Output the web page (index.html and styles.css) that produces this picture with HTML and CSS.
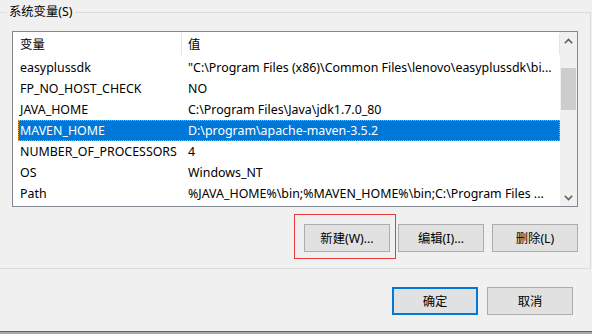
FILE: index.html
```html
<!DOCTYPE html>
<html lang="zh-CN">
<head>
<meta charset="utf-8">
<title>系统变量</title>
<link rel="stylesheet" href="styles.css">
</head>
<body>
<div class="dialog">
  <div class="group">
    <span class="legend">系统变量(S)</span>
    <div class="list">
      <div class="table">
        <div class="hdr"><span class="c1">变量</span><span class="c2">值</span></div>
        <div class="row"><span class="c1">easyplussdk</span><span class="c2">"C:\Program Files (x86)\Common Files\lenovo\easyplussdk\bi...</span></div>
        <div class="row"><span class="c1">FP_NO_HOST_CHECK</span><span class="c2">NO</span></div>
        <div class="row"><span class="c1">JAVA_HOME</span><span class="c2">C:\Program Files\Java\jdk1.7.0_80</span></div>
        <div class="row sel"><span class="c1">MAVEN_HOME</span><span class="c2">D:\program\apache-maven-3.5.2</span></div>
        <div class="row"><span class="c1">NUMBER_OF_PROCESSORS</span><span class="c2">4</span></div>
        <div class="row"><span class="c1">OS</span><span class="c2">Windows_NT</span></div>
        <div class="row"><span class="c1">Path</span><span class="c2">%JAVA_HOME%\bin;%MAVEN_HOME%\bin;C:\Program Files ...</span></div>
      </div>
      <div class="scrollbar">
        <div class="arrow">
          <svg width="9" height="6" viewBox="0 0 9 6"><path d="M0.8 5.2 L4.5 1.5 L8.2 5.2" fill="none" stroke="#606060" stroke-width="1.6"/></svg>
        </div>
        <div class="track"><div class="thumb"></div></div>
        <div class="arrow">
          <svg width="9" height="6" viewBox="0 0 9 6"><path d="M0.8 0.8 L4.5 4.5 L8.2 0.8" fill="none" stroke="#606060" stroke-width="1.6"/></svg>
        </div>
      </div>
    </div>
    <div class="btns">
      <div class="mark-wrap">
        <button class="btn">新建(W)...</button>
        <span class="mark"></span>
      </div>
      <button class="btn">编辑(I)...</button>
      <button class="btn">删除(L)</button>
    </div>
  </div>
  <div class="footer">
    <button class="btn default">确定</button>
    <button class="btn">取消</button>
  </div>
  <div class="edge"></div>
</div>
</body>
</html>
```
FILE: styles.css
```css
html, body {
  margin: 0;
  padding: 0;
  background: #f0f0f0;
}
*, *::before, *::after {
  box-sizing: border-box;
}
body {
  width: 592px;
  height: 334px;
  overflow: hidden;
  font-family: "Noto Sans", "Noto Sans CJK SC", sans-serif;
  font-size: 12px;
  color: #000;
}
.dialog {
  display: flex;
  flex-direction: column;
  height: 334px;
}
.group {
  position: relative;
  margin: 12px 1px 0 -2px;
  border: 1px solid #dcdcdc;
  height: 257px;
  padding: 18px 12px 0 13px;
  display: flex;
  flex-direction: column;
}
.legend {
  position: absolute;
  left: 8px;
  top: -10px;
  padding: 0 3px 0 2px;
  background: #f0f0f0;
  line-height: 18px;
  font-size: 12.3px;
  color: #000;
}
.list {
  border: 1px solid #828790;
  background: #fff;
  height: 176px;
  display: flex;
}
.table {
  flex: 1;
  display: flex;
  flex-direction: column;
  font-size: 12.4px;
}
.hdr {
  display: flex;
  height: 25px;
  align-items: stretch;
}
.hdr .c1 {
  width: 169px;
  padding-left: 7px;
  border-right: 1px solid #e5e5e5;
  display: flex;
  align-items: center;
  margin: 1px 0 2px 0;
}
.hdr .c2 {
  flex: 1;
  padding-left: 6px;
  border-right: 1px solid #e5e5e5;
  display: flex;
  align-items: center;
  margin: 1px 0 2px 0;
}
.row {
  display: flex;
  height: 21px;
  margin-left: 5px;
  align-items: center;
  white-space: nowrap;
}
.row .c1 {
  width: 168px;
  padding-left: 2px;
  overflow: hidden;
}
.row .c2 {
  flex: 1;
  padding-left: 2px;
  overflow: hidden;
}
.row.sel {
  background: #0078d7;
  color: #fff;
  outline: 1px dotted #f0a030;
  outline-offset: -1px;
}
.scrollbar {
  width: 17px;
  background: #f0f0f0;
  display: flex;
  flex-direction: column;
}
.arrow {
  height: 17px;
  display: flex;
  align-items: center;
  justify-content: center;
}
.track {
  flex: 1;
  padding-top: 19px;
}
.thumb {
  margin: 0 1px;
  height: 42px;
  background: #cdcdcd;
}
.btns {
  display: flex;
  justify-content: flex-end;
  gap: 8px;
  margin-top: 17px;
}
.btn {
  width: 86px;
  height: 28px;
  border: 1px solid #adadad;
  background: #e1e1e1;
  font-family: "Noto Sans", "Noto Sans CJK SC", sans-serif;
  font-size: 12.3px;
  color: #000;
  padding: 0;
  margin: 0;
}
.btn.default {
  border: 2px solid #0078d7;
}
.mark-wrap {
  position: relative;
  display: flex;
}
.mark {
  position: absolute;
  left: -10px;
  top: -10px;
  width: 102px;
  height: 45px;
  border: 1px solid #e83a3a;
  pointer-events: none;
}
.footer {
  display: flex;
  justify-content: flex-end;
  gap: 9px;
  margin-top: 18px;
  padding-right: 19px;
}
.edge {
  margin-top: auto;
  height: 3px;
  border-top: 1px solid #646464;
  background: #a8a8a8;
}
```
